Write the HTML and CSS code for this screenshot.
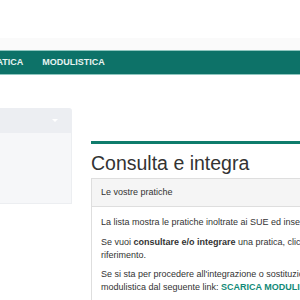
FILE: index.html
```html
<!DOCTYPE html>
<html lang="it">
<head>
<meta charset="utf-8">
<title>Consulta e integra</title>
<link rel="stylesheet" href="styles.css">
</head>
<body>
<div class="page">
  <header class="top"></header>
  <div class="strip"></div>
  <nav class="nav">
    <ul class="nav-list">
      <li class="nav-item">PRATICA</li>
      <li class="nav-item">MODULISTICA</li>
    </ul>
  </nav>
  <div class="content">
    <aside class="side">
      <div class="side-head"><span class="caret"></span></div>
      <div class="side-body"></div>
    </aside>
    <main class="main">
      <div class="rule"></div>
      <h1 class="title">Consulta e integra</h1>
      <section class="panel">
        <div class="panel-head">Le vostre pratiche</div>
        <div class="panel-body">
          <p>La lista mostra le pratiche inoltrate ai SUE ed inserite nel sistema.</p>
          <p>Se vuoi <b>consultare e/o integrare</b> una pratica, clicca sul numero di<br>riferimento.</p>
          <p>Se si sta per procedere all'integrazione o sostituzione di documenti, scaricare la<br>modulistica dal seguente link: <a class="link">SCARICA MODULISTICA</a></p>
        </div>
      </section>
    </main>
  </div>
</div>
</body>
</html>
```
FILE: styles.css
```css
html, body {
  margin: 0;
  padding: 0;
  background: #fff;
  overflow: hidden;
}
.page {
  width: 300px;
  height: 300px;
  overflow: hidden;
  font-family: "Liberation Sans", Arial, sans-serif;
  color: #333;
}
.top {
  height: 38px;
  background: #fff;
}
.strip {
  height: 12px;
  background: #fafafa;
}
.nav {
  height: 23px;
  background: #0d7268;
  border-top: 1px solid #8fc6bf;
  border-bottom: 1px solid #8fc6bf;
}
.nav-list {
  list-style: none;
  margin: 0 0 0 -16px;
  padding: 0;
  display: flex;
  gap: 19px;
  white-space: nowrap;
}
.nav-item {
  font-size: 9px;
  font-weight: bold;
  color: #e8f4f2;
  line-height: 23px;
}
.content {
  display: flex;
  align-items: flex-start;
  width: 600px;
}
.side {
  width: 72px;
  margin-top: 33px;
  flex: none;
}
.side-head {
  height: 25px;
  background: #eceef2;
  border-radius: 0 3px 0 0;
  position: relative;
}
.caret {
  position: absolute;
  left: 52px;
  top: 11px;
  width: 0;
  height: 0;
  border-left: 3.5px solid transparent;
  border-right: 3.5px solid transparent;
  border-top: 3.5px solid #fff;
}
.side-body {
  height: 70px;
  background: #f6f7f9;
  border-right: 1px solid #eceef1;
  border-bottom: 1px solid #eceef1;
}
.main {
  margin-left: 19px;
  width: 480px;
  padding-top: 66px;
}
.rule {
  height: 3px;
  background: #0f7c6c;
}
.title {
  font-size: 19.5px;
  font-weight: normal;
  line-height: 22px;
  margin: 8px 0 4px 0;
  color: #333;
}
.panel {
  border: 1px solid #dedede;
}
.panel-head {
  background: #f5f5f5;
  border-bottom: 1px solid #dedede;
  font-size: 9px;
  line-height: 13px;
  padding: 7px 9px;
  color: #333;
}
.panel-body {
  padding: 9px 9px;
  font-size: 9px;
  line-height: 13px;
}
.panel-body p {
  margin: 0 0 6.5px 0;
  white-space: nowrap;
}
.link {
  font-weight: bold;
  color: #128a78;
}
```
